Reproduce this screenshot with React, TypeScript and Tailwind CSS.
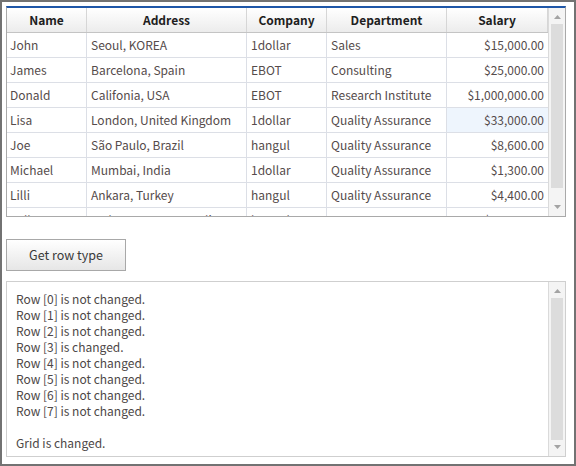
const rows = [
  { name: "John", address: "Seoul, KOREA", company: "1dollar", dept: "Sales", salary: "$15,000.00" },
  { name: "James", address: "Barcelona, Spain", company: "EBOT", dept: "Consulting", salary: "$25,000.00" },
  { name: "Donald", address: "Califonia, USA", company: "EBOT", dept: "Research Institute", salary: "$1,000,000.00" },
  { name: "Lisa", address: "London, United Kingdom", company: "1dollar", dept: "Quality Assurance", salary: "$33,000.00" },
  { name: "Joe", address: "São Paulo, Brazil", company: "hangul", dept: "Quality Assurance", salary: "$8,600.00" },
  { name: "Michael", address: "Mumbai, India", company: "1dollar", dept: "Quality Assurance", salary: "$1,300.00" },
  { name: "Lilli", address: "Ankara, Turkey", company: "hangul", dept: "Quality Assurance", salary: "$4,400.00" },
  { name: "Sally", address: "Sydney, NSW, Australia", company: "hangul", dept: "R&D", salary: "$12,000.00" },
];

const log = [
  "Row [0] is not changed.",
  "Row [1] is not changed.",
  "Row [2] is not changed.",
  "Row [3] is changed.",
  "Row [4] is not changed.",
  "Row [5] is not changed.",
  "Row [6] is not changed.",
  "Row [7] is not changed.",
  "",
  "Grid is changed.",
];

const font = { fontFamily: '"Noto Sans CJK KR", "Noto Sans", sans-serif' };

function ScrollBar({ thumb }: { thumb: string }) {
  return (
    <div className="w-[17px] shrink-0 border-l border-[#dadada] bg-[#f4f4f4] flex flex-col items-center">
      <div className="h-[16px] flex items-center justify-center pt-[2px]">
        <svg width="7" height="4" viewBox="0 0 7 4">
          <path d="M3.5 0 L7 4 L0 4 Z" fill="#a3a3a3" />
        </svg>
      </div>
      <div className={`w-[12px] bg-[#dcdcdc] ${thumb}`} />
      <div className="flex-1" />
      <div className="h-[16px] flex items-center justify-center pb-[2px]">
        <svg width="7" height="4" viewBox="0 0 7 4">
          <path d="M0 0 L7 0 L3.5 4 Z" fill="#a3a3a3" />
        </svg>
      </div>
    </div>
  );
}

export default function App() {
  const cols = ["w-[80px]", "w-[160px]", "w-[80px]", "w-[120px]", "w-[101px]"];
  return (
    <div className="w-[576px] h-[466px] border-2 border-[#727272] bg-white p-[4px] flex flex-col" style={font}>
      {/* grid */}
      <div className="w-[560px] h-[211px] border border-[#a9a9a9] border-t-2 border-t-[#1f57a8] flex overflow-hidden">
        <div className="w-[541px] overflow-hidden">
          <div className="flex h-[25px] border-b border-[#c4c4c4] bg-gradient-to-b from-white to-[#ececec] text-[12px] font-semibold text-[#1e1e1e]">
            {["Name", "Address", "Company", "Department", "Salary"].map((h, i) => (
              <div key={h} className={`${cols[i]} shrink-0 border-r border-[#d6d6d6] flex items-center justify-center`}>
                {h}
              </div>
            ))}
          </div>
          {rows.map((r, ri) => (
            <div key={ri} className="flex h-[25px] border-b border-[#dcdfe6] text-[12px] text-[#554b4b]">
              <div className={`${cols[0]} shrink-0 border-r border-[#dcdfe6] flex items-center pl-[3px]`}>{r.name}</div>
              <div className={`${cols[1]} shrink-0 border-r border-[#dcdfe6] flex items-center pl-[4px]`}>{r.address}</div>
              <div className={`${cols[2]} shrink-0 border-r border-[#dcdfe6] flex items-center pl-[4px]`}>{r.company}</div>
              <div className={`${cols[3]} shrink-0 border-r border-[#dcdfe6] flex items-center pl-[4px]`}>{r.dept}</div>
              <div
                className={`${cols[4]} shrink-0 flex items-center justify-end pr-[4px] ${ri === 3 ? "bg-[#eef5fd]" : ""}`}
              >
                {r.salary}
              </div>
            </div>
          ))}
        </div>
        <ScrollBar thumb="h-[164px]" />
      </div>

      {/* button */}
      <button className="mt-[22px] w-[120px] h-[32px] border border-[#a8a8a8] bg-gradient-to-b from-white to-[#e6e6e6] text-[12.5px] text-[#3a3a3a] flex items-center justify-center">
        Get row type
      </button>

      {/* output */}
      <div className="mt-[10px] w-[560px] h-[176px] border border-[#cfcfcf] flex">
        <div className="flex-1 pl-[9px] pt-[9px] text-[12px] leading-[16px] text-[#4d4747]">
          {log.map((l, i) => (
            <div key={i} className="h-[16px]">
              {l}
            </div>
          ))}
        </div>
        <ScrollBar thumb="h-[142px]" />
      </div>
    </div>
  );
}
